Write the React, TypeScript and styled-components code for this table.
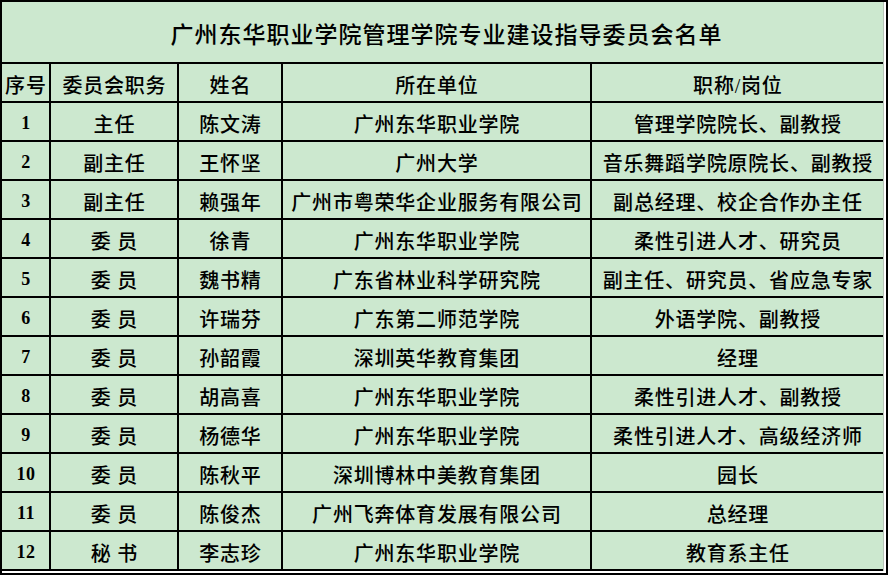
import React from "react";
import styled, { createGlobalStyle } from "styled-components";

const GlobalStyle = createGlobalStyle`
  html, body { margin: 0; padding: 0; background: #ffffff; }
  * { box-sizing: border-box; }
`;

const Frame = styled.div`
  width: 888px;
  height: 575px;
  border-top: 2px solid #000;
  border-left: 2px solid #000;
  border-right: 2px solid #000;
  border-bottom: 2px solid #000;
  padding-right: 2px;
  padding-bottom: 2px;
  background: #ffffff;
`;

const Sheet = styled.div`
  display: grid;
  grid-template-columns: 49px 128px 104px 309px 1fr;
  grid-template-rows: 62px;
  grid-auto-rows: 39px;
  background: #cce8cf;
  border-right: 1px solid #b8c4b9;
  font-family: "Liberation Serif", "Noto Sans CJK SC", serif;
  color: #000;
`;

const Title = styled.div`
  grid-column: 1 / -1;
  display: flex;
  align-items: center;
  justify-content: center;
  border-bottom: 2px solid #000;
  font-size: 23px;
  font-weight: 500;
  letter-spacing: 1px;
  padding-left: 8px;
  padding-top: 1px;
`;

const Cell = styled.div<{ $last?: boolean; $num?: boolean }>`
  display: flex;
  align-items: center;
  justify-content: center;
  border-bottom: 2px solid #000;
  border-right: ${(p) => (p.$last ? "none" : "2px solid #000")};
  font-size: ${(p) => (p.$num ? "18px" : "20px")};
  font-weight: ${(p) => (p.$num ? 700 : 500)};
  letter-spacing: ${(p) => (p.$num ? "0.5px" : "0.8px")};
  padding-left: 0.8px;
  padding-top: 3px;
  white-space: nowrap;
  overflow: hidden;
`;

const rows: [string, string, string, string, string][] = [
  ["1", "主任", "陈文涛", "广州东华职业学院", "管理学院院长、副教授"],
  ["2", "副主任", "王怀坚", "广州大学", "音乐舞蹈学院原院长、副教授"],
  ["3", "副主任", "赖强年", "广州市粤荣华企业服务有限公司", "副总经理、校企合作办主任"],
  ["4", "委 员", "徐青", "广州东华职业学院", "柔性引进人才、研究员"],
  ["5", "委 员", "魏书精", "广东省林业科学研究院", "副主任、研究员、省应急专家"],
  ["6", "委 员", "许瑞芬", "广东第二师范学院", "外语学院、副教授"],
  ["7", "委 员", "孙韶霞", "深圳英华教育集团", "经理"],
  ["8", "委 员", "胡高喜", "广州东华职业学院", "柔性引进人才、副教授"],
  ["9", "委 员", "杨德华", "广州东华职业学院", "柔性引进人才、高级经济师"],
  ["10", "委 员", "陈秋平", "深圳博林中美教育集团", "园长"],
  ["11", "委 员", "陈俊杰", "广州飞奔体育发展有限公司", "总经理"],
  ["12", "秘 书", "李志珍", "广州东华职业学院", "教育系主任"],
];

const header = ["序号", "委员会职务", "姓名", "所在单位", "职称/岗位"];

export default function App() {
  return (
    <>
      <GlobalStyle />
      <Frame>
        <Sheet>
          <Title>广州东华职业学院管理学院专业建设指导委员会名单</Title>
          {header.map((h, i) => (
            <Cell key={"h" + i} $last={i === 4}>
              {h}
            </Cell>
          ))}
          {rows.map((r, ri) =>
            r.map((c, ci) => (
              <Cell key={ri + "-" + ci} $last={ci === 4} $num={ci === 0}>
                {c}
              </Cell>
            ))
          )}
        </Sheet>
      </Frame>
    </>
  );
}
